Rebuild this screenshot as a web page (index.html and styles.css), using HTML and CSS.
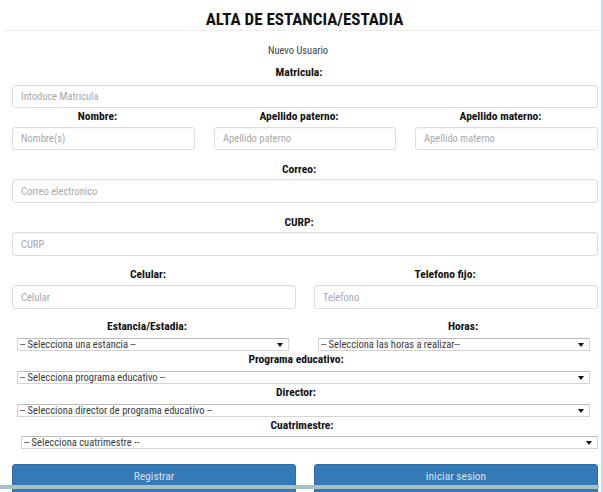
FILE: index.html
```html
<!DOCTYPE html>
<html lang="es">
<head>
<meta charset="utf-8">
<title>Alta de estancia/estadia</title>
<link rel="stylesheet" href="styles.css">
</head>
<body>
<div class="page">
  <header class="header"><h1 class="title">ALTA DE ESTANCIA/ESTADIA</h1></header>
  <form class="form">
    <p class="subtitle">Nuevo Usuario</p>

    <label class="lbl lbl-matricula">Matricula:</label>
    <input class="inp inp-matricula" placeholder="Intoduce Matricula">

    <div class="row row-3">
      <div class="col"><label class="lbl lbl-row1">Nombre:</label><input class="inp inp-row1" placeholder="Nombre(s)"></div>
      <div class="col"><label class="lbl lbl-row1">Apellido paterno:</label><input class="inp inp-row1" placeholder="Apellido paterno"></div>
      <div class="col"><label class="lbl lbl-row1">Apellido materno:</label><input class="inp inp-row1" placeholder="Apellido materno"></div>
    </div>

    <label class="lbl lbl-correo">Correo:</label>
    <input class="inp inp-tall" placeholder="Correo electronico">

    <label class="lbl lbl-curp">CURP:</label>
    <input class="inp inp-tall" placeholder="CURP">

    <div class="row row-2">
      <div class="col"><label class="lbl lbl-cel">Celular:</label><input class="inp inp-cel" placeholder="Celular"></div>
      <div class="col"><label class="lbl lbl-cel lbl-tel">Telefono fijo:</label><input class="inp inp-cel" placeholder="Telefono"></div>
    </div>

    <div class="row row-sel">
      <div class="col"><label class="lbl lbl-est">Estancia/Estadia:</label>
        <div class="sel"><select><option>-- Selecciona una estancia --</option></select></div></div>
      <div class="col"><label class="lbl lbl-est lbl-horas">Horas:</label>
        <div class="sel"><select><option>-- Selecciona las horas a realizar--</option></select></div></div>
    </div>

    <label class="lbl lbl-small">Programa educativo:</label>
    <div class="sel sel-wide"><select><option>-- Selecciona programa educativo --</option></select></div>

    <label class="lbl lbl-small">Director:</label>
    <div class="sel sel-wide"><select><option>-- Selecciona director de programa educativo --</option></select></div>

    <label class="lbl lbl-small lbl-cuatri">Cuatrimestre:</label>
    <div class="sel sel-cuatri"><select><option>-- Selecciona cuatrimestre --</option></select></div>

    <div class="row row-2 row-btn">
      <button type="button" class="btn">Registrar</button>
      <button type="button" class="btn">iniciar sesion</button>
    </div>
  </form>
</div>
<div class="hscroll"></div>
<div class="vedge"></div>
</body>
</html>
```
FILE: styles.css
```css
html, body {
  margin: 0;
  padding: 0;
  background: #ffffff;
  overflow: hidden;
}
body {
  font-family: Roboto, "Open Sans", "Liberation Sans", sans-serif;
  font-stretch: 75%;
  color: #111;
}
.page {
  width: 603px;
  height: 492px;
  overflow: hidden;
}
.header {
  margin: 0 3px;
  height: 31px;
  box-sizing: border-box;
  padding-top: 8px;
  border-bottom: 1px solid #eeeeee;
  display: flex;
  align-items: center;
  justify-content: center;
  padding-left: 6px;
}
.title {
  margin: 0;
  font-size: 17px;
  line-height: 20px;
  font-weight: bold;
  color: #111;
}
.form {
  padding: 0 5px 0 12px;
  display: flex;
  flex-direction: column;
}
.subtitle {
  margin: 14px 0 0;
  line-height: 12px;
  font-size: 10.5px;
  color: #444;
  text-align: center;
  padding-right: 14px;
}
.lbl {
  display: block;
  text-align: center;
  font-size: 11.5px;
  font-weight: bold;
  line-height: 14px;
  color: #111;
  padding-right: 12px;
}
.lbl-matricula { margin-top: 8px; }
.lbl-row1 { margin-top: 1px; }
.lbl-correo, .lbl-curp { margin-top: 12px; }
.lbl-cel { margin-top: 11px; }
.lbl-tel { padding-right: 22px; }
.lbl-est { margin-top: 10px; }
.lbl-horas { padding-right: 0; padding-left: 18px; }
.lbl-small { margin-top: 1px; padding-right: 18px; }
.lbl-cuatri { padding-right: 6px; }

.inp {
  display: block;
  box-sizing: border-box;
  width: 100%;
  height: 24px;
  border: 1px solid #dddddd;
  border-radius: 3px;
  padding: 0 8px;
  font-family: inherit;
  font-stretch: 75%;
  font-size: 10.5px;
  color: #333;
  background: #fff;
  box-shadow: inset 0 1px 1px rgba(0,0,0,0.03);
}
.inp::placeholder { color: #a8a8a8; }
.inp-matricula { margin-top: 6px; height: 23px; }
.inp-row1 { margin-top: 4px; height: 23px; }
.inp-tall { margin-top: 3px; }
.inp-cel { margin-top: 4px; }

.row { display: grid; }
.row-3 { grid-template-columns: 183px 182px 183px; column-gap: 19px; }
.row-2 { grid-template-columns: 284px 284px; column-gap: 18px; }
.row-sel { grid-template-columns: 272px 272px; column-gap: 29px; padding-left: 5px; }

.sel {
  position: relative;
  margin-top: 4px;
  height: 13px;
}
.sel select {
  -webkit-appearance: none;
  appearance: none;
  display: block;
  box-sizing: border-box;
  width: 100%;
  height: 13px;
  margin: 0;
  padding: 0 12px 0 2px;
  border: 1px solid #d4d4d4;
  border-top-color: #bdbdbd;
  border-radius: 0;
  background: #fff;
  font-family: inherit;
  font-stretch: 75%;
  font-size: 10.5px;
  line-height: 11px;
  color: #3a3a3a;
}
.sel::after {
  content: "";
  position: absolute;
  right: 6px;
  top: 5px;
  width: 0;
  height: 0;
  border-left: 3px solid transparent;
  border-right: 3px solid transparent;
  border-top: 4px solid #111;
}
.row-sel .sel { margin-top: 5px; }
.sel-wide { margin-top: 5px; margin-left: 5px; margin-right: 8px; }
.sel-cuatri { margin-left: 9px; margin-right: 0; }

.row-btn { margin-top: 15px; }
.btn {
  height: 30px;
  border: 1px solid #2e6da4;
  border-radius: 3px;
  background: #337ab7;
  color: #d3e1ee;
  font-family: inherit;
  font-stretch: 75%;
  font-size: 11.5px;
  padding: 0 0 7px;
}

.hscroll {
  position: fixed;
  left: 0;
  right: 4px;
  top: 485px;
  height: 4px;
  background: #a9c0c1;
}
.vedge {
  position: fixed;
  top: 0;
  right: 0;
  width: 2px;
  height: 492px;
  background: #c7ddf4;
}
```
